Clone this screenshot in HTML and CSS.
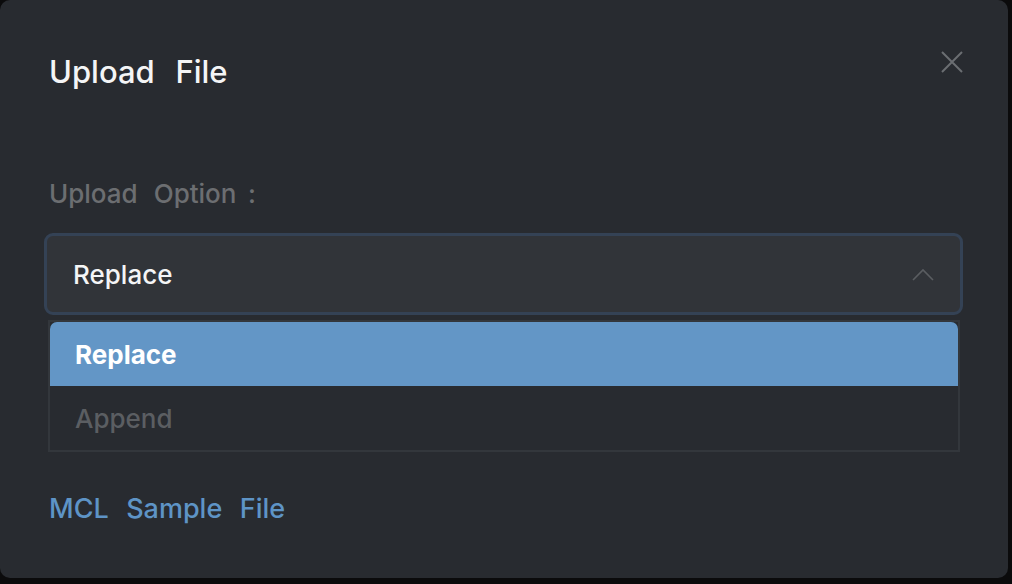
FILE: index.html
```html
<!DOCTYPE html>
<html>
<head>
<meta charset="utf-8">
<link rel="stylesheet" href="styles.css">
</head>
<body>
<div class="modal">
  <div class="header">
    <h1 class="title">Upload File</h1>
    <button class="close" aria-label="Close">
      <svg width="24" height="24" viewBox="0 0 24 24"><path d="M2 2 L22 22 M22 2 L2 22" stroke="#6b6e72" stroke-width="2" fill="none"/></svg>
    </button>
  </div>
  <div class="label">Upload Option<span class="tight"> :</span></div>
  <div class="select">
    <span class="select-value">Replace</span>
    <svg class="chevron" width="22" height="14" viewBox="0 0 22 14"><path d="M1 12 L11 2 L21 12" stroke="#5a5d61" stroke-width="1.6" fill="none"/></svg>
  </div>
  <div class="menu">
    <div class="option active">Replace</div>
    <div class="option">Append</div>
  </div>
  <a class="link">MCL Sample File</a>
</div>
</body>
</html>
```
FILE: styles.css
```css
html, body {
  margin: 0;
  padding: 0;
  background: #0b0b0c;
  width: 1012px;
  height: 584px;
  overflow: hidden;
}
body {
  font-family: "Inter", "Open Sans", sans-serif;
}
.modal {
  width: 1008px;
  height: 578px;
  background: #282b30;
  border-radius: 10px;
  box-sizing: border-box;
  padding: 0 45px 0 44px;
  display: flex;
  flex-direction: column;
}
.header {
  display: flex;
  justify-content: space-between;
  height: 146px;
  padding-left: 5px;
  box-sizing: border-box;
}
.title {
  margin: 0;
  color: #f4f5f6;
  font-size: 31px;
  font-weight: 500;
  word-spacing: 0.4em;
  padding-top: 54px;
  line-height: 36px;
}
.close {
  background: none;
  border: none;
  padding: 0;
  margin-right: -1px;
  margin-top: 50px;
  width: 24px;
  height: 24px;
}
.close svg { display: block; }
.label {
  color: #6c6e71;
  font-size: 26px;
  font-weight: 500;
  word-spacing: 0.35em;
  padding-left: 5px;
  line-height: 30px;
  margin-top: 33px;
}
.tight { word-spacing: 0.18em; }
.select {
  margin-top: 24px;
  height: 82px;
  box-sizing: border-box;
  border: 3px solid #344255;
  border-radius: 9px;
  background: #313439;
  display: flex;
  align-items: center;
  justify-content: space-between;
  padding: 0 26px 0 26px;
}
.select-value {
  color: #f4f5f6;
  font-size: 26px;
  font-weight: 500;
}
.chevron { display: block; margin-top: 2px; }
.menu {
  margin: 5px 3px 0 4px;
  border: 2px solid #33373c;
  display: flex;
  flex-direction: column;
}
.option {
  height: 64px;
  display: flex;
  align-items: center;
  padding-left: 25px;
  font-size: 26px;
  font-weight: 500;
  color: #5b5e62;
}
.option.active {
  background: #6396c6;
  color: #ffffff;
  font-weight: 700;
  border-radius: 7px 7px 0 0;
}
.link {
  margin-top: 42px;
  padding-left: 5px;
  color: #5e94c6;
  font-size: 27px;
  font-weight: 500;
  word-spacing: 0.38em;
  line-height: 30px;
}
```
